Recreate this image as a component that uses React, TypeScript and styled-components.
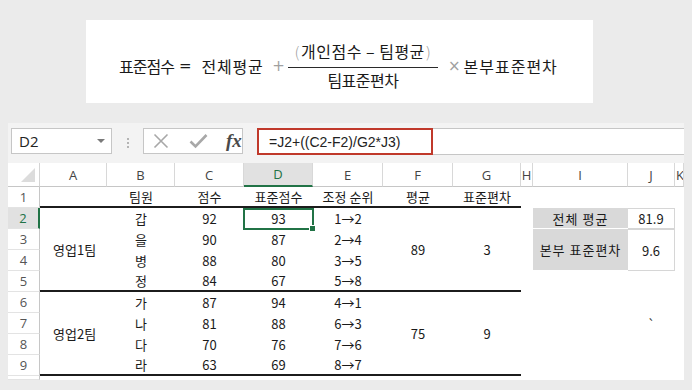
import React from 'react';
import styled, { createGlobalStyle } from 'styled-components';

const GlobalStyle = createGlobalStyle`
  html, body { margin: 0; padding: 0; background: #ebebeb; }
  body { width: 692px; height: 390px; overflow: hidden; font-family: "Noto Sans CJK KR", "Noto Sans", sans-serif; }
`;

const Page = styled.div`
  width: 692px;
  height: 390px;
  box-sizing: border-box;
  padding-top: 20px;
  display: flex;
  flex-direction: column;
`;

/* ---------- formula picture ---------- */
const FormulaCard = styled.div`
  margin-left: 86px;
  width: 507px;
  height: 83px;
  box-sizing: border-box;
  padding: 8px 0 0 33px;
  background: #fff;
  display: flex;
  align-items: center;
  font-family: "Noto Sans CJK KR", sans-serif;
  font-size: 16px;
  color: #1a1a1a;
`;

const Word = styled.span<{ $ml?: number; $ls?: number }>`
  margin-left: ${p => p.$ml ?? 0}px;
  letter-spacing: ${p => p.$ls ?? 1}px;
  white-space: nowrap;
  line-height: 16px;
`;

const Op = styled.span<{ $ml?: number; $light?: boolean }>`
  margin-left: ${p => p.$ml ?? 0}px;
  color: ${p => (p.$light ? '#a0a0a0' : '#1a1a1a')};
  font-family: "DejaVu Sans", sans-serif;
  font-size: 15px;
  line-height: 16px;
`;

const Fraction = styled.span<{ $ml?: number }>`
  margin-left: ${p => p.$ml ?? 0}px;
  width: 150px;
  display: inline-flex;
  flex-direction: column;
  align-items: center;
`;

const Numerator = styled.span`
  line-height: 16px;
  margin-bottom: 6px;
  white-space: nowrap;
  letter-spacing: 0.5px;
`;

const Paren = styled.span`
  color: #9a9a9a;
  font-family: "DejaVu Sans", sans-serif;
  font-weight: 300;
`;

const FracBar = styled.span`
  align-self: stretch;
  height: 1px;
  background: #2a2a2a;
`;

const Denominator = styled.span`
  line-height: 16px;
  margin-top: 4px;
  letter-spacing: -0.5px;
  white-space: nowrap;
`;

/* ---------- spreadsheet ---------- */
const Sheet = styled.div`
  margin: 20px 0 0 8px;
  width: 676px;
  height: 257px;
  background: #f3f3f3;
  display: flex;
  flex-direction: column;
  overflow: hidden;
`;

const FormulaBar = styled.div`
  height: 40px;
  box-sizing: border-box;
  padding: 5px 0 0 3px;
  display: flex;
  align-items: flex-start;
  flex-shrink: 0;
`;

const NameBox = styled.div`
  width: 101px;
  height: 26px;
  box-sizing: border-box;
  border: 1px solid #c6c6c6;
  background: #fff;
  display: flex;
  align-items: center;
  justify-content: space-between;
  padding: 0 6px 0 7px;
  font-family: "Open Sans", "Liberation Sans", sans-serif;
  font-size: 15px;
  color: #222;
`;

const Caret = styled.span`
  width: 0;
  height: 0;
  border-left: 4px solid transparent;
  border-right: 4px solid transparent;
  border-top: 4px solid #7a7a7a;
`;

const Grip = styled.div`
  margin: 10px 0 0 15px;
  width: 3px;
  display: flex;
  flex-direction: column;
  gap: 2px;
`;

const GripDot = styled.span`
  width: 2px;
  height: 2px;
  background: #b4b4b4;
`;

const FxGroup = styled.div`
  margin-left: 13px;
  width: 100px;
  height: 26px;
  box-sizing: border-box;
  border: 1px solid #c6c6c6;
  background: #fff;
  display: flex;
  align-items: center;
  padding-left: 9px;
  gap: 20px;
`;

const FxLabel = styled.span`
  font-family: "Liberation Serif", "DejaVu Serif", serif;
  font-style: italic;
  font-weight: 700;
  font-size: 19px;
  color: #4a4a4a;
  margin-left: -2px;
`;

const FormulaInput = styled.div`
  margin-left: 14px;
  flex: 1;
  height: 27px;
  box-sizing: border-box;
  border-top: 1px solid #c6c6c6;
  border-bottom: 1px solid #c6c6c6;
  background: #fff;
  display: flex;
`;

const Highlight = styled.div`
  width: 176px;
  height: 27px;
  margin-top: -1px;
  box-sizing: border-box;
  border: 2px solid #c0392b;
  display: flex;
  align-items: center;
  padding-left: 10px;
  font-family: "Liberation Sans", Arial, sans-serif;
  font-size: 14px;
  color: #222;
`;

const Grid = styled.div`
  display: grid;
  grid-template-columns: 32px 67px 68px 69px 69px 70px 70px 68px 12px 95px 47px 9px;
  grid-template-rows: 24px repeat(9, 21px) 4px;
  background: #fff;
  font-family: "Noto Sans CJK KR", sans-serif;
  font-size: 13px;
`;

const Corner = styled.div`
  grid-column: 1;
  grid-row: 1;
  display: flex;
  align-items: flex-end;
  justify-content: flex-end;
  padding: 0 4px 4px 0;
  border-right: 1px solid #d4d4d4;
  border-bottom: 1px solid #c6c6c6;
  box-sizing: border-box;
`;

const CornerTriangle = styled.span`
  width: 14px;
  height: 14px;
  background: #dcdcdc;
  clip-path: polygon(100% 0, 100% 100%, 0 100%);
`;

const ColHead = styled.div<{ $col: number; $active?: boolean; $left?: boolean }>`
  grid-column: ${p => p.$col};
  grid-row: 1;
  display: flex;
  align-items: center;
  justify-content: ${p => (p.$left ? 'flex-start' : 'center')};
  padding-left: ${p => (p.$left ? '1px' : '0')};
  box-sizing: border-box;
  border-right: 1px solid #d8d8d8;
  border-bottom: ${p => (p.$active ? '2px solid #217346' : '1px solid #c6c6c6')};
  background: ${p => (p.$active ? '#e1e1e1' : '#fff')};
  color: ${p => (p.$active ? '#217346' : '#444')};
  font-family: "Open Sans", "Liberation Sans", sans-serif;
  font-size: 13px;
  overflow: hidden;
`;

const RowHead = styled.div<{ $row: number; $active?: boolean }>`
  grid-column: 1;
  grid-row: ${p => p.$row};
  display: flex;
  align-items: center;
  justify-content: center;
  box-sizing: border-box;
  border-bottom: 1px solid #e3e3e3;
  border-right: ${p => (p.$active ? '2px solid #217346' : '1px solid #c6c6c6')};
  background: ${p => (p.$active ? '#e1e1e1' : '#fff')};
  color: ${p => (p.$active ? '#217346' : '#555')};
  font-family: "Open Sans", "Liberation Sans", sans-serif;
  font-size: 13px;
`;

const Cell = styled.div<{
  $col: number;
  $row: number;
  $span?: number;
  $left?: boolean;
  $rule?: boolean;
}>`
  grid-column: ${p => p.$col};
  grid-row: ${p => p.$row} / span ${p => p.$span ?? 1};
  display: flex;
  align-items: center;
  justify-content: ${p => (p.$left ? 'flex-start' : 'center')};
  padding-left: ${p => (p.$left ? '13px' : '0')};
  box-sizing: border-box;
  border-bottom: ${p => (p.$rule ? '2px solid #1c1c1c' : 'none')};
  color: #1a1a1a;
  white-space: nowrap;
  position: relative;
`;

const Selection = styled.span`
  position: absolute;
  left: -1px;
  top: 0;
  right: -1px;
  bottom: -1px;
  border: 2px solid #217346;
  pointer-events: none;
`;

const FillHandle = styled.span`
  position: absolute;
  right: -4px;
  bottom: -4px;
  width: 5px;
  height: 5px;
  background: #217346;
  border: 1px solid #fff;
`;

const LabelCell = styled.div<{ $row: number; $span?: number }>`
  grid-column: 10;
  grid-row: ${p => p.$row} / span ${p => p.$span ?? 1};
  background: #d9d9d9;
  border-bottom: 1px solid #fff;
  display: flex;
  align-items: center;
  justify-content: center;
  letter-spacing: 1px;
  color: #1a1a1a;
`;

const ValueCell = styled.div<{ $row: number; $span?: number }>`
  grid-column: 11;
  grid-row: ${p => p.$row} / span ${p => p.$span ?? 1};
  border: 1px solid #d6d6d6;
  border-left: none;
  box-sizing: border-box;
  display: flex;
  align-items: center;
  justify-content: center;
  color: #1a1a1a;
`;

const Stray = styled.div`
  grid-column: 11;
  grid-row: 8;
  display: flex;
  align-items: center;
  justify-content: center;
  color: #333;
`;

const XIcon = () => (
  <svg width="16" height="16" viewBox="0 0 16 16">
    <path d="M1.5 1.5 L14.5 14.5 M14.5 1.5 L1.5 14.5" stroke="#a8a8a8" strokeWidth="1.6" fill="none" />
  </svg>
);

const CheckIcon = () => (
  <svg width="19" height="16" viewBox="0 0 19 16">
    <path d="M1.5 8.5 L6.5 13.5 L17.5 2" stroke="#a8a8a8" strokeWidth="2.6" fill="none" />
  </svg>
);

const columns = ['A', 'B', 'C', 'D', 'E', 'F', 'G', 'H', 'I', 'J', 'K'];

const teams = [
  {
    name: '영업1팀',
    avg: '89',
    sd: '3',
    rows: [
      ['갑', '92', '93', '1→2'],
      ['을', '90', '87', '2→4'],
      ['병', '88', '80', '3→5'],
      ['정', '84', '67', '5→8'],
    ],
  },
  {
    name: '영업2팀',
    avg: '75',
    sd: '9',
    rows: [
      ['가', '87', '94', '4→1'],
      ['나', '81', '88', '6→3'],
      ['다', '70', '76', '7→6'],
      ['라', '63', '69', '8→7'],
    ],
  },
];

const headers = ['팀원', '점수', '표준점수', '조정 순위', '평균', '표준편차'];

export default function App() {
  return (
    <>
      <GlobalStyle />
      <Page>
        <FormulaCard>
          <Word $ls={-1}>표준점수</Word>
          <Op $ml={5}>=</Op>
          <Word $ml={10} $ls={0.75}>전체평균</Word>
          <Op $ml={9} $light>+</Op>
          <Fraction $ml={3}>
            <Numerator>
              <Paren>(</Paren>개인점수 – 팀평균<Paren>)</Paren>
            </Numerator>
            <FracBar />
            <Denominator>팀표준편차</Denominator>
          </Fraction>
          <Op $ml={10} $light>×</Op>
          <Word $ml={3} $ls={1}>본부표준편차</Word>
        </FormulaCard>

        <Sheet>
          <FormulaBar>
            <NameBox>
              D2
              <Caret />
            </NameBox>
            <Grip>
              <GripDot />
              <GripDot />
              <GripDot />
            </Grip>
            <FxGroup>
              <XIcon />
              <CheckIcon />
              <FxLabel>fx</FxLabel>
            </FxGroup>
            <FormulaInput>
              <Highlight>=J2+((C2-F2)/G2*J3)</Highlight>
            </FormulaInput>
          </FormulaBar>

          <Grid>
            <Corner>
              <CornerTriangle />
            </Corner>
            {columns.map((c, i) => (
              <ColHead key={c} $col={i + 2} $active={c === 'D'} $left={c === 'K'}>
                {c}
              </ColHead>
            ))}
            {Array.from({ length: 10 }, (_, i) => (
              <RowHead key={i} $row={i + 2} $active={i === 1}>
                {i < 9 ? i + 1 : ''}
              </RowHead>
            ))}

            <Cell $col={2} $row={2} $rule />
            {headers.map((h, i) => (
              <Cell key={h} $col={i + 3} $row={2} $rule>
                {h}
              </Cell>
            ))}

            {teams.map((t, ti) => {
              const start = 3 + ti * 4;
              return (
                <React.Fragment key={t.name}>
                  <Cell $col={2} $row={start} $span={4} $left $rule>
                    {t.name}
                  </Cell>
                  {t.rows.map((r, ri) => {
                    const row = start + ri;
                    const last = ri === 3;
                    return (
                      <React.Fragment key={r[0]}>
                        <Cell $col={3} $row={row} $rule={last}>{r[0]}</Cell>
                        <Cell $col={4} $row={row} $rule={last}>{r[1]}</Cell>
                        <Cell $col={5} $row={row} $rule={last}>
                          {r[2]}
                          {ti === 0 && ri === 0 && (
                            <Selection>
                              <FillHandle />
                            </Selection>
                          )}
                        </Cell>
                        <Cell $col={6} $row={row} $rule={last}>{r[3]}</Cell>
                      </React.Fragment>
                    );
                  })}
                  <Cell $col={7} $row={start} $span={4} $rule>{t.avg}</Cell>
                  <Cell $col={8} $row={start} $span={4} $rule>{t.sd}</Cell>
                </React.Fragment>
              );
            })}

            <LabelCell $row={3}>전체 평균</LabelCell>
            <ValueCell $row={3}>81.9</ValueCell>
            <LabelCell $row={4} $span={2}>본부 표준편차</LabelCell>
            <ValueCell $row={4} $span={2}>9.6</ValueCell>
            <Stray>`</Stray>
          </Grid>
        </Sheet>
      </Page>
    </>
  );
}
